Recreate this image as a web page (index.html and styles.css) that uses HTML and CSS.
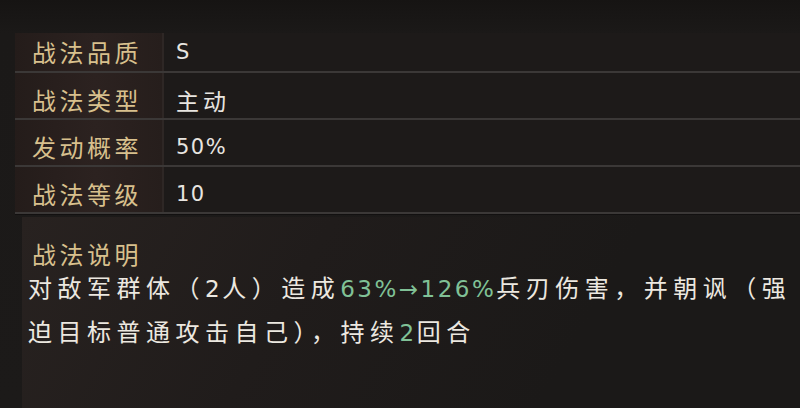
FILE: index.html
```html
<!DOCTYPE html>
<html lang="zh-CN">
<head>
    <meta charset="UTF-8">
    <title>战法详情</title>
    <link rel="stylesheet" href="styles.css">
</head>
<body>
    <div class="panel">
        <div class="row first">
            <div class="label">战法品质</div>
            <div class="value">S</div>
        </div>
        <div class="row">
            <div class="label">战法类型</div>
            <div class="value cn">主动</div>
        </div>
        <div class="row">
            <div class="label">发动概率</div>
            <div class="value">50%</div>
        </div>
        <div class="row">
            <div class="label">战法等级</div>
            <div class="value">10</div>
        </div>

        <div class="desc">
            <h3 class="desc-title">战法说明</h3>
            <p class="desc-text">对敌军群体（<span class="num">2</span>人）造成<span class="num hl">63%→126%</span>兵刃伤害，并朝讽（强<br>迫目标普通攻击自己），持续<span class="num hl">2</span>回合</p>
        </div>
    </div>
</body>
</html>
```

FILE: styles.css
```css
* {
    box-sizing: border-box;
}
body {
    margin: 0;
    background: #1b1918;
    font-family: "Noto Sans CJK SC", "Noto Sans", sans-serif;
    width: 800px;
    height: 408px;
    overflow: hidden;
}
.panel {
    padding-top: 33px;
    height: 408px;
    background: linear-gradient(to bottom, #161413 0px, #1b1918 33px, #1c1a19 100%);
}
.row {
    display: flex;
    margin-left: 15px;
    height: 47px;
    border-bottom: 2px solid #3b3837;
    box-shadow: 0 1px 0 #121010;
    background: #1d1a19;
}
.row.first {
    height: 40px;
}
.label {
    width: 149px;
    padding-left: 17px;
    padding-top: 9px;
    line-height: 36px;
    font-size: 24px;
    letter-spacing: 3.5px;
    color: #d8c08d;
    border-right: 2px solid #2e2725;
    background: linear-gradient(to right, #241c1a 0%, #2c2220 55%, #261e1c 100%);
}
.value {
    padding-left: 12px;
    padding-top: 9px;
    line-height: 36px;
    font-family: "DejaVu Sans", sans-serif;
    font-size: 21px;
    letter-spacing: 1.5px;
    color: #e8e5e0;
}
.row.first .label,
.row.first .value {
    padding-top: 0;
    line-height: 38px;
}
.value.cn {
    font-family: "Noto Sans CJK SC", sans-serif;
    font-size: 23px;
    letter-spacing: 4px;
}
.desc {
    margin: 3px 0 0 22px;
    padding: 20px 0 0 6px;
    height: 200px;
    background: linear-gradient(120deg, #282220 0%, #201c1b 35%, #1b1918 70%);
}
.desc-title {
    margin: 0 0 0 4px;
    font-weight: normal;
    font-size: 24px;
    line-height: 34px;
    letter-spacing: 3.5px;
    color: #d8c08d;
}
.desc-text {
    margin: -5px 0 0 0;
    font-size: 24px;
    line-height: 42px;
    letter-spacing: 5.5px;
    color: #ece8e0;
    white-space: nowrap;
}
.num {
    font-family: "DejaVu Sans", sans-serif;
    font-size: 23px;
    letter-spacing: 2.5px;
}
.hl {
    color: #80c196;
}
```
